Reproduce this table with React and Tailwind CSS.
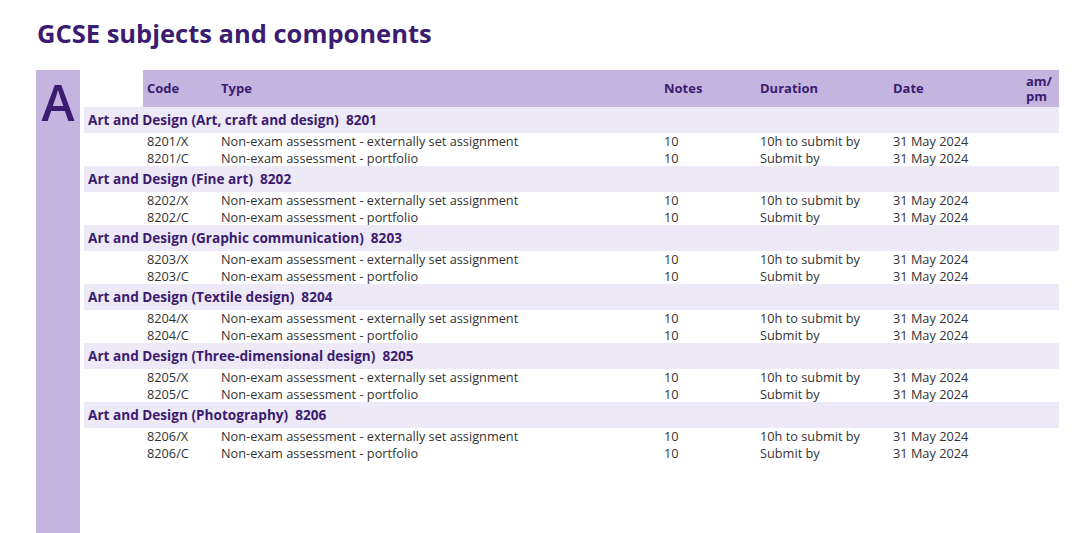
const subjects = [
  { name: "Art and Design (Art, craft and design)", code: "8201" },
  { name: "Art and Design (Fine art)", code: "8202" },
  { name: "Art and Design (Graphic communication)", code: "8203" },
  { name: "Art and Design (Textile design)", code: "8204" },
  { name: "Art and Design (Three-dimensional design)", code: "8205" },
  { name: "Art and Design (Photography)", code: "8206" },
];

function Row({ code, type, notes, duration, date }) {
  return (
    <div className="flex ml-[59px] h-[16.5px] leading-[16.5px] text-[12.75px] text-[#333]">
      <div className="w-[74px] pl-1">{code}</div>
      <div className="w-[443px] pl-[4px]">{type}</div>
      <div className="w-[96px] pl-[4px]">{notes}</div>
      <div className="w-[133px] pl-[4px]">{duration}</div>
      <div className="w-[133px] pl-[4px]">{date}</div>
      <div className="flex-1"></div>
    </div>
  );
}

export default function App() {
  return (
    <div
      className="w-[1080px] h-[533px] bg-white overflow-hidden"
      style={{ fontFamily: '"Open Sans", "Noto Sans", sans-serif' }}
    >
      {/* Title */}
      <h1 className="pl-[37px] pt-[15px] h-[70px] text-[25.5px] font-bold text-[#3b1c70] leading-[36px]">
        GCSE subjects and components
      </h1>

      <div className="flex pl-[36px]">
        {/* Letter bar */}
        <div className="w-[44px] h-[463px] bg-[#c4b4e0] flex justify-center shrink-0">
          <span className="text-[50px] leading-[64px] text-[#3b1c70] font-semibold">A</span>
        </div>

        {/* Table */}
        <div className="ml-[4px] w-[975px]">
          <div className="ml-[59px] h-[37px] bg-[#c4b4e0] flex items-center text-[13px] font-bold text-[#3b1c70]">
            <div className="w-[74px] pl-1">Code</div>
            <div className="w-[443px] pl-[4px]">Type</div>
            <div className="w-[96px] pl-[4px]">Notes</div>
            <div className="w-[133px] pl-[4px]">Duration</div>
            <div className="w-[133px] pl-[4px]">Date</div>
            <div className="flex-1 pl-[4px] leading-[15px]">
              am/
              <br />
              pm
            </div>
          </div>

          {subjects.map((s) => (
            <div key={s.code}>
              <div className="h-[26px] bg-[#ede9f6] flex items-center pl-[4px] text-[13.6px] font-bold text-[#3b1c70] whitespace-pre">
                {s.name + "  " + s.code}
              </div>
              <Row
                code={s.code + "/X"}
                type="Non-exam assessment - externally set assignment"
                notes="10"
                duration="10h to submit by"
                date="31 May 2024"
              />
              <Row
                code={s.code + "/C"}
                type="Non-exam assessment - portfolio"
                notes="10"
                duration="Submit by"
                date="31 May 2024"
              />
            </div>
          ))}
        </div>
      </div>
    </div>
  );
}
